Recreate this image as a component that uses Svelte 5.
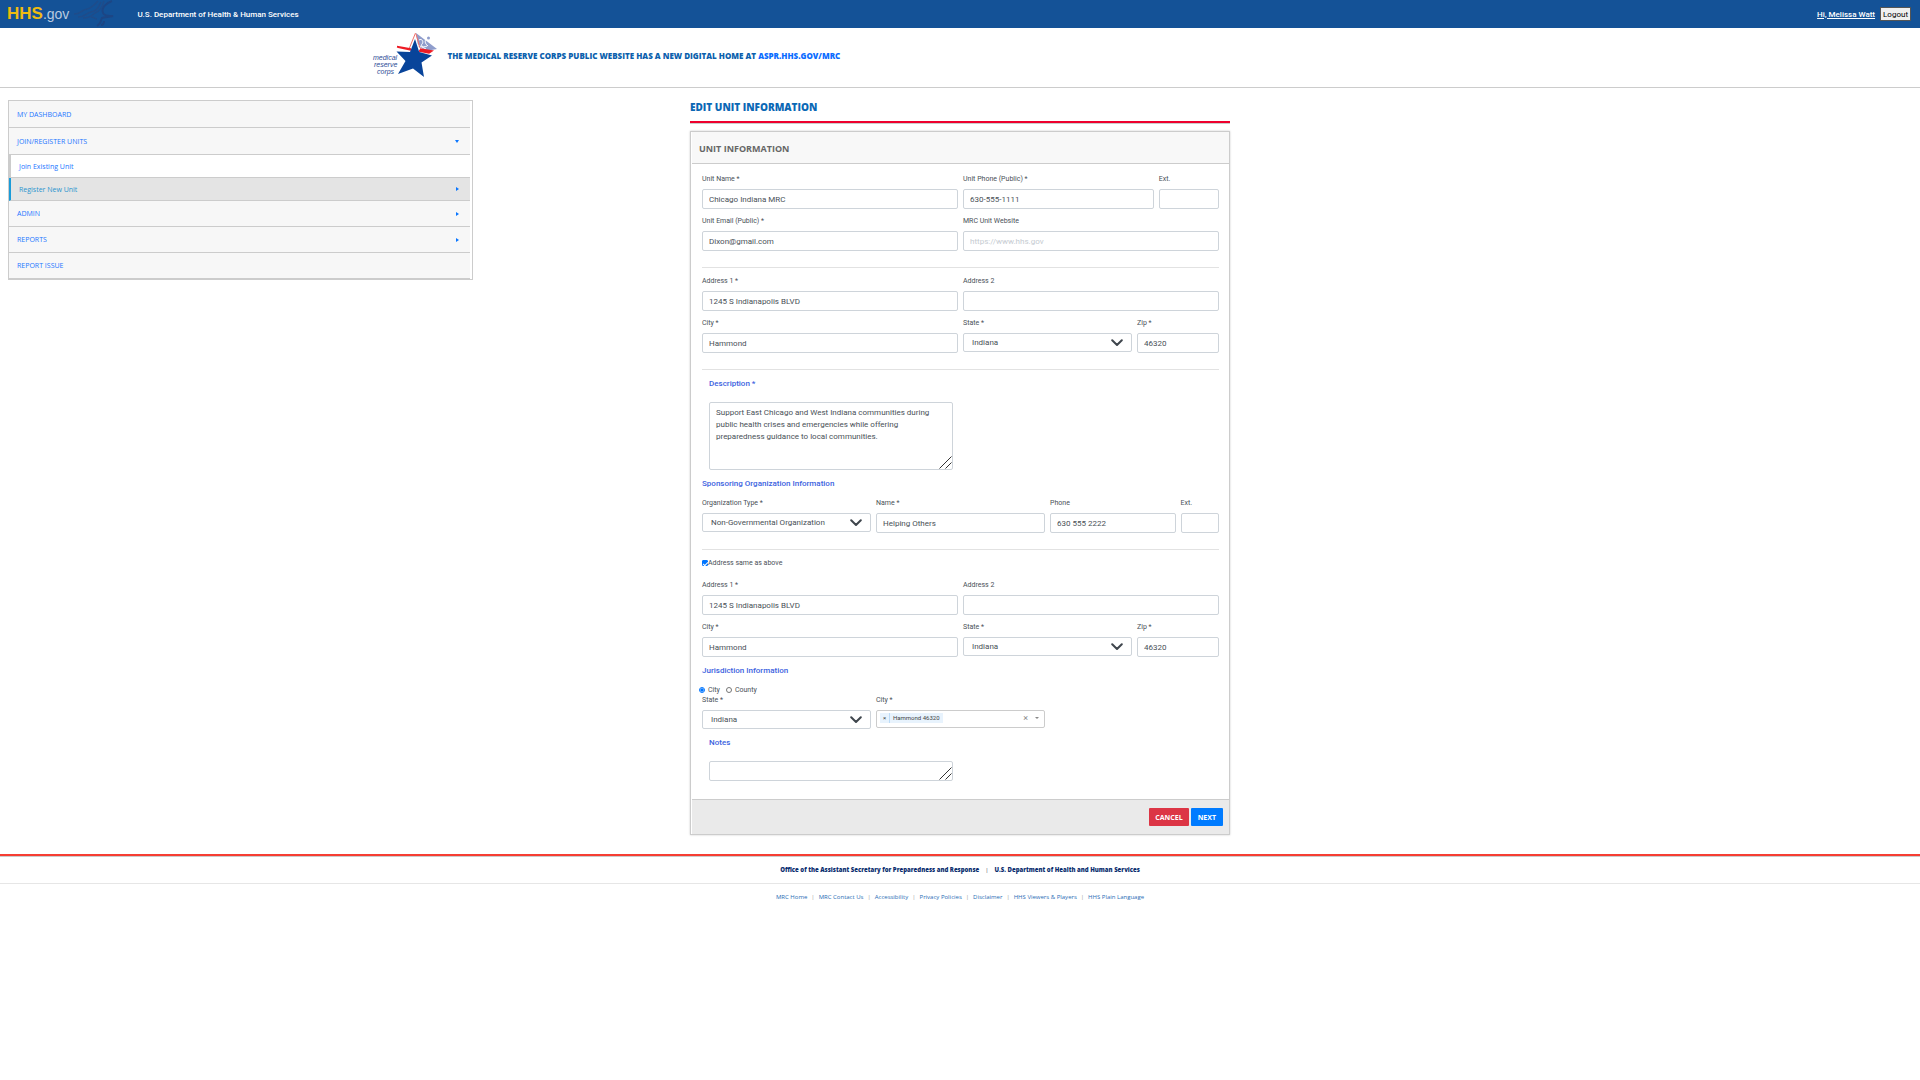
<script>
  const menu = [
    { text: 'My Dashboard' },
    { text: 'Join/Register Units', arrow: 'down' },
    { text: 'Join Existing Unit', sub: true },
    { text: 'Register New Unit', sub: true, active: true, arrow: 'right' },
    { text: 'Admin', arrow: 'right' },
    { text: 'Reports', arrow: 'right' },
    { text: 'Report Issue' }
  ];
  const footerLinks = [
    'MRC Home', 'MRC Contact Us', 'Accessibility', 'Privacy Policies',
    'Disclaimer', 'HHS Viewers & Players', 'HHS Plain Language'
  ];
  let description = $state(
    'Support East Chicago and West Indiana communities during public health crises and emergencies while offering preparedness guidance to local communities.'
  );
  let notes = $state('');
  let area = $state('city');
  let sameAddress = $state(true);
</script>

{#snippet field(id, label, value, span, placeholder = '')}
  <div class="field {span}">
    <label for={id}>{label}</label>
    <input type="text" {id} {value} {placeholder} />
  </div>
{/snippet}

{#snippet choice(id, label, value, span)}
  <div class="field {span}">
    <label for={id}>{label}</label>
    <div class="select">
      <select {id}><option>{value}</option></select>
      <svg class="chevron" viewBox="0 0 12 8" aria-hidden="true"><path d="M1.2 1.2 6 6l4.800-4.800" /></svg>
    </div>
  </div>
{/snippet}

{#snippet grip()}
  <svg class="grip" viewBox="0 0 13 13" aria-hidden="true"><path d="M.5 12.500 12.500.5M6.500 12.500l6-6" /></svg>
{/snippet}

<header class="topbar">
  <a class="hhs" href="#hhs" aria-label="HHS.gov"><b>HHS</b><span>.gov</span></a>
  <svg class="eagle" viewBox="0 0 40 28" aria-hidden="true">
    <path class="wing" d="M0 14c7 0 7-4 13-5 5-1 6-3 11-8M4 17c7 0 8-4 13-5 6-1 7-4 10-10M9 18c8 0 9-3 12-5 5-2 7-5 9-12M17 17c3 0 4 2 6 2" />
    <path class="body" d="M38 1c-6 2-11 7-9 12 1 3 5 3 10 3-4 1-9 1-11 2-2 3 0 5-5 8m4-1c2 0 3-2 3-4" />
  </svg>
  <strong>U.S. Department of Health &amp; Human Services</strong>
  <a class="user" href="#profile">Hi, Melissa Watt</a>
  <button class="logout" type="button">Logout</button>
</header>

<div class="banner">
  <svg class="mrc" viewBox="0 0 66 48" role="img" aria-label="medical reserve corps">
    <path d="M44 1 65 17 54 19 46 14Z" fill="#8f9dcc" />
    <path d="M47 8c3-2 5 2 3 4s2 4 5 2M55 7c-3 1-2 5 1 7M44 12l10 5" fill="none" stroke="#fff" />
    <circle cx="56.500" cy="6" r="1.500" fill="#8f9dcc" />
    <path d="M43.500 1 37 17M44 2l4 14" stroke="#f2706b" fill="none" />
    <path d="M25 14.500 39 17M48 17l12 2-3 2-10-2M25 15l14 3" stroke="#ee1c25" stroke-width="1.500" fill="#ee1c25" />
    <path d="M43 7 47.200 20 60 23.500 49.500 30.500 52 45 41 36.500 26 42 33.500 29 24.500 19.500 38 20Z" fill="#08449a" />
    <g fill="#2c4b96" font-size="7" font-family="Liberation Sans, sans-serif" font-style="italic">
      <text x="1" y="28">medical</text><text x="2" y="35">reserve</text><text x="5" y="42">corps</text>
    </g>
  </svg>
  <p>THE MEDICAL RESERVE CORPS PUBLIC WEBSITE HAS A NEW DIGITAL HOME AT <a href="#mrc">ASPR.HHS.GOV/MRC</a></p>
</div>

<div class="page">
  <nav class="side">
    {#each menu as item}
      <a href="#menu" class:sub={item.sub} class:active={item.active}>
        {item.text}
        {#if item.arrow}<i class={item.arrow}></i>{/if}
      </a>
    {/each}
  </nav>

  <main>
    <h1>EDIT UNIT INFORMATION</h1>
    <form class="panel" onsubmit={(e) => e.preventDefault()}>
      <h2>UNIT INFORMATION</h2>
      <div class="content">
        <div class="grid">
          {@render field('unit', 'Unit Name *', 'Chicago Indiana MRC', 'w12')}
          {@render field('phone', 'Unit Phone (Public) *', '630-555-1111', 'w9')}
          {@render field('ext', 'Ext.', '', 'w3')}
          {@render field('email', 'Unit Email (Public) *', 'Dixon@gmail.com', 'w12')}
          {@render field('site', 'MRC Unit Website', '', 'w12', 'https://www.hhs.gov')}
        </div>
        <hr />
        <div class="grid">
          {@render field('a1', 'Address 1 *', '1245 S Indianapolis BLVD', 'w12')}
          {@render field('a2', 'Address 2', '', 'w12')}
          {@render field('city', 'City *', 'Hammond', 'w12')}
          {@render choice('state', 'State *', 'Indiana', 'w8')}
          {@render field('zip', 'Zip *', '46320', 'w4')}
        </div>
        <hr />
        <div class="area">
          <label for="desc">Description *</label>
          <div class="box"><textarea id="desc" rows="5" bind:value={description}></textarea>{@render grip()}</div>
        </div>
        <h3>Sponsoring Organization Information</h3>
        <div class="grid">
          {@render choice('otype', 'Organization Type *', 'Non-Governmental Organization', 'w8')}
          {@render field('oname', 'Name *', 'Helping Others', 'w8')}
          {@render field('ophone', 'Phone', '630 555 2222', 'w6')}
          {@render field('oext', 'Ext.', '', 'w2')}
        </div>
        <hr />
        <label class="tick"><input type="checkbox" bind:checked={sameAddress} />Address same as above</label>
        <div class="grid">
          {@render field('b1', 'Address 1 *', '1245 S Indianapolis BLVD', 'w12')}
          {@render field('b2', 'Address 2', '', 'w12')}
          {@render field('bcity', 'City *', 'Hammond', 'w12')}
          {@render choice('bstate', 'State *', 'Indiana', 'w8')}
          {@render field('bzip', 'Zip *', '46320', 'w4')}
        </div>
        <h3>Jurisdiction Information</h3>
        <div class="radios">
          <label><input type="radio" name="area" value="city" bind:group={area} />City</label>
          <label><input type="radio" name="area" value="county" bind:group={area} />County</label>
        </div>
        <div class="grid">
          {@render choice('jstate', 'State *', 'Indiana', 'w8')}
          <div class="field w8">
            <label for="jcity">City *</label>
            <div class="multi">
              <span class="chip"><button type="button" aria-label="Remove Hammond">×</button><span>Hammond 46320</span></span>
              <input id="jcity" type="text" />
              <button type="button" class="clear" aria-label="Clear all">×</button>
              <i></i>
            </div>
          </div>
        </div>
        <div class="area">
          <label for="notes">Notes</label>
          <div class="box"><textarea id="notes" rows="1" bind:value={notes}></textarea>{@render grip()}</div>
        </div>
      </div>
      <div class="actions">
        <button type="button" class="cancel">CANCEL</button>
        <button type="submit" class="next">NEXT</button>
      </div>
    </form>
  </main>
</div>

<footer>
  <p class="office">
    <a href="#aspr">Office of the Assistant Secretary for Preparedness and Response</a>
    <span>|</span>
    <a href="#dhhs">U.S. Department of Health and Human Services</a>
  </p>
  <nav>
    {#each footerLinks as link, i}
      {#if i}<span>|</span>{/if}<a href="#footer">{link}</a>
    {/each}
  </nav>
</footer>

<style>
  :global(body) {
    background: #fff;
    color: #495057;
    font-family: Roboto, sans-serif;
    font-size: 8px;
  }
  :global(body *) { box-sizing: border-box; }
  h1, h2, h3, p { margin: 0; }
  a { text-decoration: none; }
  button, input, select, textarea { font: inherit; color: inherit; }

  .topbar {
    display: flex;
    align-items: center;
    height: 28px;
    padding: 0 9px 0 7px;
    background: #145297;
    color: #fff;
  }
  .hhs { display: flex; align-items: baseline; color: #b9cbe0; font: 15px "Liberation Sans", sans-serif; }
  .hhs b { color: #efbb10; font-size: 17px; }
  .hhs span { font-size: 14px; }
  .eagle { width: 40px; height: 28px; margin: 0 23px 0 5px; fill: none; stroke-width: 1.5; }
  .wing { stroke: #1f4c8a; }
  .body { stroke: #1c4685; stroke-width: 2; }
  .topbar strong { font-weight: 500; }
  .user { margin-left: auto; color: #fff; font-weight: 500; text-decoration: underline; }
  .logout {
    height: 14px;
    margin-left: 5px;
    padding: 0 2px;
    background: #efefef;
    border: 1px solid #555;
    color: #000;
  }

  .banner {
    display: flex;
    align-items: center;
    height: 60px;
    padding-left: 19.400%;
    border-bottom: 1px solid #ccc;
    font-family: "Open Sans", sans-serif;
  }
  .mrc { width: 66px; height: 48px; margin: 0 9px 3px 0; }
  .banner p { color: #0b5fad; font-size: 8px; font-weight: 800; line-height: 12px; padding-bottom: 4px; }
  .banner a { color: #0a6cff; }

  .page {
    display: grid;
    grid-template-columns: minmax(0, 1fr) minmax(0, 540px) minmax(0, 1fr);
    align-items: start;
    padding: 12px 8px 19px;
  }
  .side {
    width: 68.200%;
    padding-right: 2px;
    border: 1px solid #ccc;
    font-family: "Open Sans", sans-serif;
    font-size: 7px;
  }
  .side a {
    display: flex;
    align-items: center;
    justify-content: space-between;
    height: 27px;
    padding: 0 11px 0 8px;
    background: #f7f7f7;
    border-bottom: 1px solid #ccc;
    color: #2376ff;
    text-transform: uppercase;
  }
  .side a.active ~ a { height: 26px; }
  .side a.sub {
    height: 23px;
    background: #fff;
    border-left: 2px solid #ccc;
    text-transform: none;
  }
  .side a.active { background: #e4e4e4; border-left-color: #1b9bd8; color: #2a94cf; }
  .side i { border: 2px solid transparent; }
  .side .down { border-top: 3px solid #0a76ff; border-bottom: 0; }
  .side .right { border-left: 3px solid #0a76ff; border-right: 0; }

  h1 {
    height: 23px;
    border-bottom: 2px solid #ee002d;
    box-shadow: 0 1px #ccc;
    color: #0b68b5;
    font: 800 10px/14px "Open Sans", sans-serif;
  }
  .panel {
    margin-top: 8px;
    padding-left: 1px;
    border: 1px solid #ccc;
    box-shadow: 0 0 2px #ccc;
  }
  h2 {
    height: 32px;
    padding-left: 7px;
    background: #f8f8f8;
    border-bottom: 1px solid #ccc;
    color: #666;
    font: 700 9px/33px "Open Sans", sans-serif;
  }
  .content { padding: 10px; }
  .grid {
    display: grid;
    grid-template-columns: repeat(24, minmax(0, 1fr));
    gap: 7px 5px;
  }
  .w12 { grid-column: span 12; }
  .w9 { grid-column: span 9; }
  .w8 { grid-column: span 8; }
  .w6 { grid-column: span 6; }
  .w4 { grid-column: span 4; }
  .w3 { grid-column: span 3; }
  .w2 { grid-column: span 2; }
  .field label { display: block; margin-bottom: 5px; font-size: 7px; line-height: 10px; }
  .field > input {
    display: block;
    width: 100%;
    height: 20px;
    padding: 0 6px;
    border: 1px solid #ced4da;
    border-radius: 2px;
    background: #fff;
  }
  input::placeholder { color: #c5cbd1; }
  .select { position: relative; }
  .select select {
    display: block;
    width: 100%;
    height: 19px;
    padding: 0 24px 0 8px;
    appearance: none;
    border: 1px solid #ced4da;
    border-radius: 2px;
    background: #fff;
  }
  .chevron {
    position: absolute;
    top: 6px;
    right: 9px;
    width: 12px;
    height: 8px;
    fill: none;
    stroke: #3f464d;
    stroke-width: 2;
    stroke-linecap: round;
    stroke-linejoin: round;
    pointer-events: none;
  }
  hr { height: 1px; margin: 16px 0 8px; border: 0; background: #e2e2e2; }
  h3 { margin: 8px 0; color: #3b62e0; font-size: 8px; font-weight: 500; line-height: 12px; }
  .area { width: 244px; max-width: 100%; margin: 8px 7px; }
  .area label { display: block; margin-bottom: 12px; color: #3b62e0; font-weight: 500; line-height: 12px; }
  .box { position: relative; }
  textarea {
    display: block;
    width: 100%;
    padding: 4px 6px 2px;
    border: 1px solid #ced4da;
    border-radius: 2px;
    line-height: 12px;
    resize: none;
  }
  .grip { position: absolute; right: 1px; bottom: 1px; width: 13px; height: 13px; fill: none; stroke: #333; stroke-width: 1; }
  .tick { display: flex; align-items: center; margin-bottom: 12px; font-size: 7px; line-height: 10px; }
  .tick input {
    display: grid;
    place-items: center;
    width: 6px;
    height: 6px;
    margin: 0;
    appearance: none;
    border: 1px solid #0075ff;
    border-radius: 1px;
  }
  .tick input:checked { background: #0075ff; }
  .tick input:checked::before {
    content: "";
    width: 2px;
    height: 4px;
    border: solid #fff;
    border-width: 0 1px 1px 0;
    transform: rotate(45deg);
  }
  .radios { display: flex; gap: 6px; font-size: 7px; line-height: 10px; }
  .radios label { display: flex; align-items: center; gap: 3px; }
  .radios label:first-child { margin-left: -3px; }
  .radios input { width: 6px; height: 6px; margin: 0; }

  .multi {
    display: flex;
    align-items: center;
    height: 18px;
    padding: 0 5px 2px 3px;
    border: 1px solid #ccc;
    border-radius: 2px;
  }
  .multi button { padding: 0; border: 0; background: none; line-height: 10px; }
  .multi input { flex: 1; min-width: 0; border: 0; outline: 0; }
  .chip { display: flex; height: 10px; background: #e8f3fd; color: #444; font-size: 6px; line-height: 10px; }
  .chip button { width: 10px; border-right: 1px solid #bcdcf8; }
  .chip span { padding: 0 3px; }
  .multi .clear { color: #888; font-size: 9px; }
  .multi i { margin-left: 7px; border: 2px solid transparent; border-top-color: #888; border-bottom: 0; }

  .actions {
    display: flex;
    justify-content: flex-end;
    gap: 2px;
    padding: 8px 6px;
    background: #eaeaea;
    border-top: 1px solid #ccc;
  }
  .actions button {
    height: 18px;
    border: 0;
    border-radius: 1px;
    color: #fff;
    font: 700 7px "Open Sans", sans-serif;
  }
  .actions .cancel { padding: 0 6px; background: #dc3545; }
  .actions .next { padding: 0 7px; background: #007bff; }

  footer {
    border-top: 2px solid #f63e33;
    box-shadow: inset 0 1px #ccc;
    font-family: "Open Sans", sans-serif;
    font-size: 6px;
    line-height: 10px;
  }
  .office, footer nav { display: flex; justify-content: center; }
  .office { gap: 6px; padding: 9px 0 8px; border-bottom: 1px solid #e6e6e6; font-weight: 800; }
  .office a { color: #0a2d6e; }
  .office span { font-weight: 400; }
  footer nav { gap: 4px; padding: 8px 0; }
  footer nav a { color: #2a6db5; }
  footer nav span { color: #999; }
</style>
